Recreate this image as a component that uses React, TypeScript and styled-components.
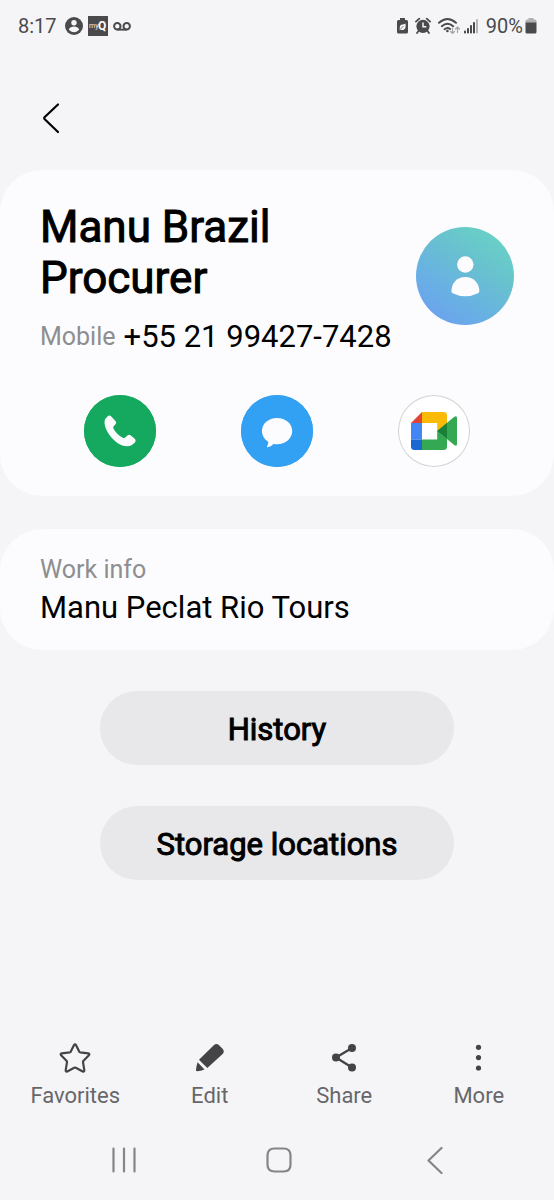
import React from "react";
import styled, { createGlobalStyle } from "styled-components";

const GlobalStyle = createGlobalStyle`
  *, *::before, *::after { box-sizing: border-box; }
  body {
    margin: 0;
    background: #f5f5f8;
    font-family: Roboto, "Liberation Sans", sans-serif;
    color: #000;
  }
  button {
    border: 0;
    padding: 0;
    background: none;
    font: inherit;
    color: inherit;
    cursor: pointer;
  }
  h1, h2, p { margin: 0; font-weight: 400; }
  svg { display: block; flex: none; }
`;

const Screen = styled.div`
  min-height: 100vh;
  display: flex;
  flex-direction: column;
`;

const StatusBar = styled.header`
  height: 52px;
  padding: 0 17px 0 18px;
  display: flex;
  align-items: center;
  justify-content: space-between;
  font-size: 20px;
  line-height: 24px;
  color: #4a4a4c;
`;

const StatusGroup = styled.div<{ $gap: number }>`
  display: flex;
  align-items: center;
  gap: ${(p) => p.$gap}px;
`;

const TopBar = styled.nav`
  height: 118px;
  padding: 46px 40px 0;
  display: flex;
  align-items: flex-start;
`;

const Cards = styled.div`
  display: flex;
  flex-direction: column;
  gap: 33px;
`;

const Card = styled.section<{ $pad: string }>`
  padding: ${(p) => p.$pad};
  border-radius: 42px;
  background: #fcfcfe;
`;

const Identity = styled.div`
  padding: 0 40px;
  display: flex;
  align-items: center;
  justify-content: space-between;
`;

const Name = styled.h1`
  font-size: 44px;
  line-height: 51px;
  -webkit-text-stroke: 1px #000;
`;

const Phone = styled.p`
  margin-top: 15px;
  display: flex;
  align-items: center;
  gap: 8px;
  font-size: 31px;
  line-height: 36px;
  white-space: nowrap;
`;

const Label = styled.span`
  font-size: 25px;
  line-height: 30px;
  color: #8e8e90;
`;

const Avatar = styled.div`
  width: 98px;
  height: 98px;
  margin-bottom: 5px;
  flex: none;
  border-radius: 50%;
  background: linear-gradient(35deg, #6ba3ee 12%, #68b2e2 36%, #68c0d0 60%, #68d1c5 88%);
`;

const Actions = styled.div`
  margin-top: 40px;
  padding: 0 42px;
  display: grid;
  grid-template-columns: repeat(3, 1fr);
  justify-items: center;
`;

const RoundButton = styled.button<{ $fill: string; $ring?: string }>`
  width: 72px;
  height: 72px;
  border-radius: 50%;
  && { background: ${(p) => p.$fill}; }
  box-shadow: inset 0 0 0 1px ${(p) => p.$ring ?? p.$fill};
`;

const WorkInfo = styled.div`
  display: flex;
  flex-direction: column;
  gap: 5px;
  font-size: 31px;
  line-height: 36px;
`;

const PillList = styled.div`
  margin: 41px 0;
  display: flex;
  flex-direction: column;
  align-items: center;
  gap: 41px;
`;

const Pill = styled.button`
  width: 64%;
  height: 74px;
  border-radius: 37px;
  && {
    padding-top: 3px;
    background: #e8e8ea;
    font-size: 31px;
    line-height: 36px;
  }
  -webkit-text-stroke: 1px #000;
`;

const Toolbar = styled.nav`
  margin-top: auto;
  padding: 0 8px;
  display: grid;
  grid-template-columns: repeat(4, 1fr);
`;

const Tool = styled.button`
  display: flex;
  flex-direction: column;
  align-items: center;
  gap: 8px;
  && {
    font-size: 22px;
    line-height: 28px;
    color: #67676a;
  }
`;

const SystemNav = styled.nav`
  padding: 36px 43px 26px 46px;
  display: grid;
  grid-template-columns: repeat(3, 1fr);
  justify-items: center;
`;

const ink = "#4a4a4c";

const StatusIcons = () => (
  <>
    <svg width="18" height="18" viewBox="0 0 18 18">
      <circle cx="9" cy="9" r="9" fill={ink} />
      <circle cx="9" cy="5.8" r="2.7" fill="#f5f5f8" />
      <path d="M3.8 12.6C4.8 10.4 6.8 9.6 9 9.6s4.200.8 5.200 3C13 14.300 11 15.200 9 15.200s-4-.9-5.200-2.600z" fill="#f5f5f8" />
    </svg>
    <svg width="20" height="20" viewBox="0 0 20 20">
      <rect width="20" height="20" fill={ink} />
      <text x="1" y="12" fontSize="7" fill="#f0f0f2">my</text>
      <text x="10" y="14" fontSize="12" fontWeight="700" fill="#fff">Q</text>
    </svg>
    <svg width="18" height="9" viewBox="0 0 18 9" fill="none" stroke={ink} strokeWidth="2">
      <circle cx="4.300" cy="4.300" r="3.200" />
      <circle cx="13.700" cy="4.300" r="3.200" />
      <path d="M4.300 7.600h9.400" />
    </svg>
  </>
);

const PowerSaveIcon = () => (
  <svg width="11" height="18" viewBox="0 0 11 18">
    <path d="M3 1h5v2h1.500Q11 3 11 4.500V15q0 1.500-1.500 1.500h-8Q0 16.500 0 15V4.500Q0 3 1.500 3H3z" fill={ink} />
    <path d="M8.600 6.500v3.600q-.4 3-3.300 2.800-1 0-1.700-.5l-1.300 1 .6-1.700Q2 8 5.200 7.400q2 0 3.400-.9z" fill="#f5f5f8" />
    <path d="M3.500 12 6.500 9" stroke={ink} strokeWidth=".7" />
  </svg>
);

const AlarmIcon = () => (
  <svg width="16" height="18" viewBox="0 0 16 18" fill="none">
    <circle cx="8" cy="9.300" r="6.600" fill={ink} />
    <path d="M.9 4.600 4.300 1.600M15.100 4.600 11.700 1.600M3.500 14l-1.500 2M12.500 14l1.500 2" stroke={ink} strokeWidth="1.800" strokeLinecap="round" />
    <path d="M8 5.500v4.300h3.300" stroke="#f5f5f8" strokeWidth="1.500" />
  </svg>
);

const WifiIcon = () => (
  <svg width="22" height="18" viewBox="0 0 22 18" fill="none" strokeLinecap="round">
    <path d="M1 5.800Q9.500-1.800 18 5.800M3.800 9.200q5.700-5 11.400 0M6.600 12.200q2.900-2.400 5.500-.2" stroke={ink} strokeWidth="1.900" />
    <circle cx="9.400" cy="14" r="1.300" fill={ink} />
    <path d="M14.500 11v5.500m-2-2 2 2 2-2M19.500 15.500V10m-2 2 2-2 2 2" stroke="#a4a4a7" strokeWidth="1.200" />
  </svg>
);

const SignalIcon = () => (
  <svg width="15" height="16" viewBox="0 0 15 16" fill={ink}>
    <rect y="12.500" width="2" height="3" rx=".8" />
    <rect x="3" y="10" width="2" height="5.500" rx=".8" />
    <rect x="6" y="7" width="2" height="8.500" rx=".8" />
    <rect x="9" y="4" width="2" height="11.500" rx=".8" />
    <rect x="12" y="1" width="2" height="14.500" rx=".8" fill="#b6b6b9" />
  </svg>
);

const BatteryIcon = () => (
  <svg width="12" height="16" viewBox="0 0 12 16">
    <path d="M3.500 0h5v1.500H10Q11.500 1.500 11.500 3v2H.5V3Q.5 1.500 2 1.500h1.500z" fill="#b0b0b3" />
    <path d="M.5 4.500h11v9.500q0 1.500-1.500 1.500H2Q.5 15.500.5 14z" fill={ink} />
  </svg>
);

const CallIcon = () => (
  <svg width="72" height="72" viewBox="0 0 72 72" fill="#fcfcfe">
    <path d="M23.500 21.400Q25.500 19.600 27.300 21.500L31.600 26.200Q32.900 27.700 31.500 29.200L29.600 31.200Q28.800 32.200 29.500 33.700Q33 39.700 38.700 42.800Q40 43.400 41 42.700L43.400 40.500Q45 39.200 46.500 40.300L51 44Q52.500 45.500 50.900 47.500Q47.800 51 43.500 51.200C37.500 51.500 30.500 47 25.500 40C21 33.600 20.300 29 20.600 26Q21 23.300 23.500 21.400Z" />
  </svg>
);

const ChatIcon = () => (
  <svg width="72" height="72" viewBox="0 0 72 72" fill="#fcfcfe">
    <path d="M36 23C44.500 23 51.200 28.500 51.200 36S44.500 49.200 36 49.200C34.800 49.200 33.600 49.100 32.500 48.900Q30.500 51.500 26.700 52.300Q25.200 52.400 26.200 51Q27.500 49.200 27.300 46.800C23.400 44.500 21 40.500 21 36C21 28.500 27.500 23 36 23Z" />
  </svg>
);

const MeetIcon = () => (
  <svg width="72" height="72" viewBox="0 0 72 72">
    <path d="M24 17 13 28h11z" fill="#e04435" />
    <path d="M24 17H45.500q3.500 0 3.500 3.500V29l-9.800 8V28H24z" fill="#fbba05" />
    <path d="M13 28h11v16.500h-11z" fill="#4285f4" />
    <path d="M13 44.500h11V55H16.500q-3.500 0-3.500-3.500z" fill="#1b67d2" />
    <path d="M24 44.500h15.200V36l9.800 8v7.500q0 3.500-3.500 3.500H24z" fill="#34a853" />
    <path d="M39.200 36 56 22Q59 20.300 59 23V49Q59 51.500 56.500 50.300z" fill="#34a853" />
    <path d="M39.200 36 49 28v16z" fill="#188038" />
  </svg>
);

const tools = [
  {
    label: "Favorites",
    art: (
      <path
        d="M14.900 3.300q1.100-1.900 2.200 0l3.100 6.300q.3.500 1 .7l8 1.100q1.900.4.700 1.900l-5.600 5.700q-.4.500-.3 1.100l1.300 8.100q.1 1.900-1.600 1.200L16.800 25.800q-.8-.4-1.600 0L8.300 29.400q-1.700.7-1.600-1.200L8 20.100q.1-.6-.3-1.100L2.100 13.300q-1.200-1.500.7-1.900l8-1.100q.7-.2 1-.7z"
        fill="none"
        stroke="#444446"
        strokeWidth="2.200"
        strokeLinejoin="round"
      />
    ),
  },
  {
    label: "Edit",
    art: (
      <g fill="#444446">
        <path d="M5 17.800 20 2.900Q22.500 1 24.800 3L28.800 7Q30.700 9.300 28.900 11.700L13.300 26z" />
        <path d="M3.600 20.300 10.500 27.500Q7 29 3 29.200 2 29.200 2 28 2.300 24 3.600 20.300z" />
      </g>
    ),
  },
  {
    label: "Share",
    art: (
      <g fill="#444446">
        <path d="M24 6 8 15.500l16 10" fill="none" stroke="#444446" strokeWidth="2.400" />
        <circle cx="24" cy="6" r="4" />
        <circle cx="8" cy="15.500" r="4" />
        <circle cx="24" cy="25.500" r="4" />
      </g>
    ),
  },
  {
    label: "More",
    art: (
      <g fill="#444446">
        <circle cx="15.500" cy="5.300" r="2.600" />
        <circle cx="15.500" cy="15.600" r="2.600" />
        <circle cx="15.500" cy="26" r="2.600" />
      </g>
    ),
  },
];

const systemKeys = [
  { label: "Recent apps", d: "M3.500 2.500v23M14 2.500v23M24.500 2.500v23" },
  { label: "Home", d: "M9.500 2.500h9q7 0 7 7v9q0 7-7 7h-9q-7 0-7-7v-9q0-7 7-7z" },
  { label: "Back", d: "M21.500 2 8.500 14.500 21.500 27" },
];

export default function App() {
  return (
    <>
      <GlobalStyle />
      <Screen>
        <StatusBar>
          <StatusGroup $gap={8}>
            <span>8:17</span>
            <StatusGroup $gap={5}>
              <StatusIcons />
            </StatusGroup>
          </StatusGroup>
          <StatusGroup $gap={7}>
            <PowerSaveIcon />
            <AlarmIcon />
            <StatusGroup $gap={4}>
              <WifiIcon />
              <SignalIcon />
            </StatusGroup>
            <StatusGroup $gap={2}>
              <span>90%</span>
              <BatteryIcon />
            </StatusGroup>
          </StatusGroup>
        </StatusBar>

        <TopBar>
          <button type="button" aria-label="Navigate up">
            <svg width="24" height="40" viewBox="0 0 24 40" fill="none" stroke="#000" strokeWidth="2.200" strokeLinecap="round" strokeLinejoin="round">
              <path d="M18 6.500 4.500 19.300Q3.800 20.200 4.500 21L18 34" />
            </svg>
          </button>
        </TopBar>

        <main>
          <Cards>
            <Card $pad="32px 0 29px">
              <Identity>
                <div>
                  <Name>Manu Brazil Procurer</Name>
                  <Phone>
                    <Label>Mobile</Label>
                    <span>+55 21 99427-7428</span>
                  </Phone>
                </div>
                <Avatar>
                  <svg width="98" height="98" viewBox="0 0 98 98" fill="#fcfcfe">
                    <circle cx="49.300" cy="37.500" r="8.200" />
                    <path d="M35.500 64.500C35 56 41.500 50 49.300 50S63.700 56 63.300 64.500Q63.200 65.700 62 66.300Q56 69.300 49.300 69.300T36.700 66.300Q35.600 65.700 35.500 64.500Z" />
                  </svg>
                </Avatar>
              </Identity>
              <Actions>
                <RoundButton type="button" aria-label="Call" $fill="#14a95f">
                  <CallIcon />
                </RoundButton>
                <RoundButton type="button" aria-label="Message" $fill="#33a1f3">
                  <ChatIcon />
                </RoundButton>
                <RoundButton type="button" aria-label="Video call" $fill="#ffffff" $ring="#d2d2d4">
                  <MeetIcon />
                </RoundButton>
              </Actions>
            </Card>

            <Card $pad="26px 40px 24px">
              <WorkInfo>
                <Label>Work info</Label>
                <p>Manu Peclat Rio Tours</p>
              </WorkInfo>
            </Card>
          </Cards>

          <PillList>
            <Pill type="button">History</Pill>
            <Pill type="button">Storage locations</Pill>
          </PillList>
        </main>

        <Toolbar>
          {tools.map((tool) => (
            <Tool type="button" key={tool.label}>
              <svg width="32" height="32" viewBox="0 0 32 32">{tool.art}</svg>
              {tool.label}
            </Tool>
          ))}
        </Toolbar>

        <SystemNav>
          {systemKeys.map((key) => (
            <button type="button" aria-label={key.label} key={key.label}>
              <svg width="28" height="28" viewBox="0 0 28 28" fill="none" stroke="#858587" strokeWidth="2.200" strokeLinecap="round" strokeLinejoin="round">
                <path d={key.d} />
              </svg>
            </button>
          ))}
        </SystemNav>
      </Screen>
    </>
  );
}
